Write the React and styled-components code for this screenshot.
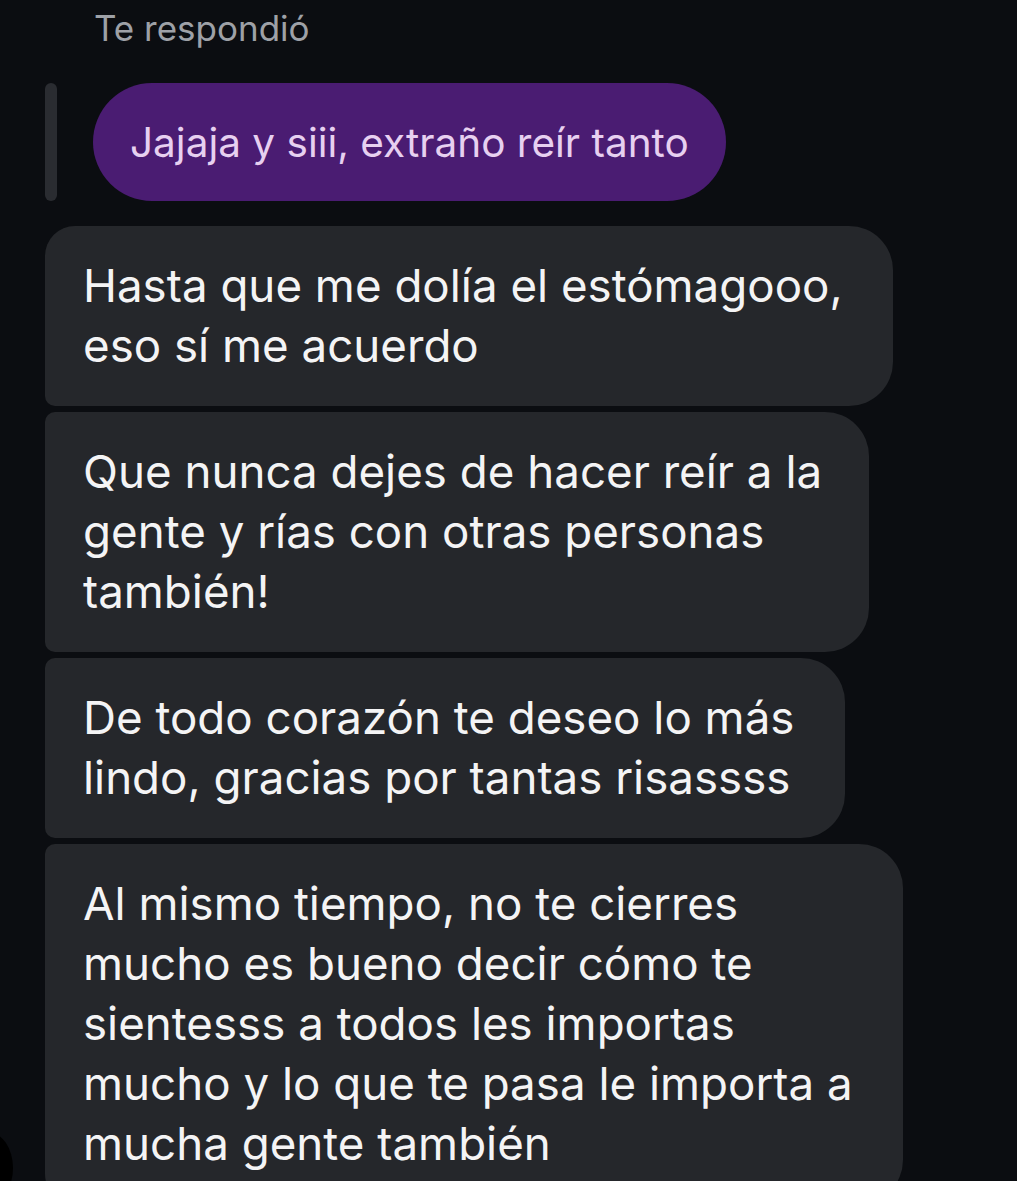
import React from "react";
import styled, { createGlobalStyle } from "styled-components";

const GlobalStyle = createGlobalStyle`
  html, body {
    margin: 0;
    padding: 0;
    background: #0b0d11;
    overflow: hidden;
  }
  body {
    font-family: Inter, "Noto Sans", "DejaVu Sans", sans-serif;
    -webkit-font-smoothing: antialiased;
  }
`;

const Thread = styled.div`
  width: 1017px;
  height: 1181px;
  overflow: hidden;
  padding: 5px 0 0 45px;
  box-sizing: border-box;
  display: flex;
  flex-direction: column;
`;

const ReplyLabel = styled.div`
  margin-left: 49px;
  color: #9ea1a7;
  font-size: 35px;
  line-height: 46px;
`;

const ReplyRow = styled.div`
  display: flex;
  align-items: stretch;
  gap: 36px;
  margin-top: 32px;
`;

const QuoteBar = styled.div`
  width: 12px;
  border-radius: 6px;
  background: #2a2c31;
`;

const QuotedBubble = styled.div`
  height: 118px;
  padding: 0 37px;
  box-sizing: border-box;
  display: flex;
  align-items: center;
  border-radius: 59px;
  background: #4a1c72;
  color: #e7d0f0;
  font-size: 40.5px;
  white-space: nowrap;
`;

const Group = styled.div`
  position: relative;
  display: flex;
  flex-direction: column;
  gap: 6px;
  margin-top: 25px;
`;

const Bubble = styled.div`
  width: ${(p) => p.$width}px;
  box-sizing: border-box;
  padding: 30px 38px;
  background: #25272b;
  color: #f4f4f5;
  font-size: 45.7px;
  line-height: 60px;
  border-radius: ${(p) => (p.$first ? 30 : 10)}px 44px 44px
    ${(p) => (p.$last ? 30 : 10)}px;
`;

const Line = styled.div`
  white-space: nowrap;
`;

const Avatar = styled.div`
  position: absolute;
  left: -82px;
  bottom: 0;
  width: 50px;
  height: 72px;
  border-radius: 50%;
  background: #000;
`;

const messages = [
  { width: 848, lines: ["Hasta que me dolía el estómagooo,", "eso sí me acuerdo"] },
  {
    width: 824,
    lines: ["Que nunca dejes de hacer reír a la", "gente y rías con otras personas", "también!"],
  },
  {
    width: 800,
    lines: ["De todo corazón te deseo lo más", "lindo, gracias por tantas risassss"],
  },
  {
    width: 858,
    lines: [
      "Al mismo tiempo, no te cierres",
      "mucho es bueno decir cómo te",
      "sientesss a todos les importas",
      "mucho y lo que te pasa le importa a",
      "mucha gente también",
    ],
  },
];

export default function App() {
  return (
    <>
      <GlobalStyle />
      <Thread>
        <ReplyLabel>Te respondió</ReplyLabel>
        <ReplyRow>
          <QuoteBar />
          <QuotedBubble>Jajaja y siii, extraño reír tanto</QuotedBubble>
        </ReplyRow>
        <Group>
          {messages.map((m, i) => (
            <Bubble
              key={i}
              $width={m.width}
              $first={i === 0}
              $last={i === messages.length - 1}
            >
              {m.lines.map((l) => (
                <Line key={l}>{l}</Line>
              ))}
            </Bubble>
          ))}
          <Avatar />
        </Group>
      </Thread>
    </>
  );
}
